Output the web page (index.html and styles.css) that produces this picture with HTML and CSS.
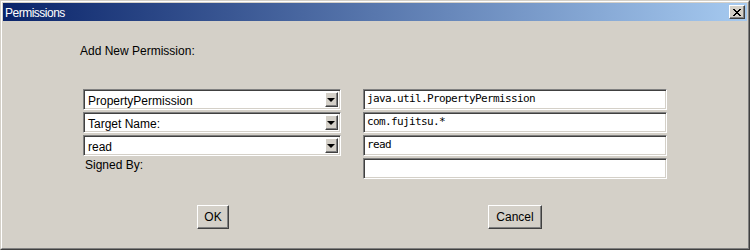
FILE: index.html
```html
<!DOCTYPE html>
<html>
<head>
<meta charset="utf-8">
<link rel="stylesheet" href="styles.css">
</head>
<body>
<div class="window">
  <div class="frame">
    <div class="titlebar">
      <span class="title">Permissions</span>
      <span class="close"><svg width="8" height="7" viewBox="0 0 8 7" shape-rendering="crispEdges"><path d="M0 0h2v1h-2zM6 0h2v1h-2zM1 1h2v1h-2zM5 1h2v1h-2zM2 2h4v1h-4zM3 3h2v1h-2zM2 4h4v1h-4zM1 5h2v1h-2zM5 5h2v1h-2zM0 6h2v1h-2zM6 6h2v1h-2z" fill="#000"/></svg></span>
    </div>
    <div class="content">
      <div class="heading">Add New Permission:</div>
      <div class="form">
        <div class="combo"><span class="combo-text">PropertyPermission</span><span class="arrow"><i></i></span></div>
        <div class="field">java.util.PropertyPermission</div>
        <div class="combo"><span class="combo-text">Target Name:</span><span class="arrow"><i></i></span></div>
        <div class="field">com.fujitsu.*</div>
        <div class="combo"><span class="combo-text">read</span><span class="arrow"><i></i></span></div>
        <div class="field">read</div>
        <div class="label">Signed By:</div>
        <div class="field"></div>
      </div>
      <div class="buttons">
        <button class="btn btn-ok">OK</button>
        <button class="btn btn-cancel">Cancel</button>
      </div>
    </div>
  </div>
</div>
</body>
</html>
```
FILE: styles.css
```css
* { box-sizing: border-box; }
html, body { margin: 0; padding: 0; background: #d4d0c8; }
body { font-family: "Liberation Sans", Arial, sans-serif; font-size: 12px; color: #000; }

.window {
  width: 750px;
  height: 250px;
  border: 1px solid;
  border-color: #d4d0c8 #404040 #404040 #d4d0c8;
  background: #d4d0c8;
}
.frame {
  height: 100%;
  border: 1px solid;
  border-color: #fff #808080 #808080 #fff;
  padding: 1px;
}
.titlebar {
  height: 18px;
  background: linear-gradient(to right, #0a246a, #a6caf0);
  display: flex;
  align-items: center;
  justify-content: space-between;
  padding: 0 2px 0 2px;
}
.title {
  color: #fff;
  font-size: 12px;
  letter-spacing: -0.5px;
  line-height: 14px;
  padding-top: 1px;
}
.close {
  width: 16px;
  height: 14px;
  background: #d4d0c8;
  border: 1px solid;
  border-color: #fff #404040 #404040 #fff;
  box-shadow: inset -1px -1px #808080;
  display: flex;
  align-items: center;
  justify-content: center;
  padding-right: 1px;
}
.close svg { display: block; }

.content {
  padding: 23px 0 0 77px;
}
.heading {
  line-height: 14px;
  height: 14px;
}
.form {
  margin: 31px 0 0 3px;
  display: grid;
  grid-template-columns: 258px 304px;
  grid-auto-rows: 21px;
  column-gap: 22px;
  row-gap: 2px;
}
.combo, .field {
  background: #fff;
  border: 1px solid;
  border-color: #808080 #fff #fff #808080;
  box-shadow: inset 1px 1px #404040, inset -1px -1px #d4d0c8;
}
.combo {
  display: flex;
  align-items: stretch;
  padding: 2px;
}
.combo-text {
  flex: 1;
  line-height: 17px;
  padding: 1px 0 0 2px;
  white-space: nowrap;
}
.arrow {
  width: 13px;
  background: #d4d0c8;
  border: 1px solid;
  border-color: #fff #404040 #404040 #fff;
  box-shadow: inset -1px -1px #808080;
  display: flex;
  align-items: center;
  justify-content: center;
}
.arrow i {
  width: 0;
  height: 0;
  border-left: 4px solid transparent;
  border-right: 4px solid transparent;
  border-top: 4px solid #000;
  margin-left: -1px;
}
.field {
  font-family: "DejaVu Sans Mono", "Liberation Mono", monospace;
  font-size: 11px;
  letter-spacing: -0.62px;
  line-height: 13px;
  padding: 2px 0 0 3px;
  white-space: nowrap;
}
.label {
  line-height: 14px;
  padding-left: 2px;
}

.buttons {
  display: flex;
  margin: 26px 0 0 117px;
}
.btn {
  font-family: "Liberation Sans", Arial, sans-serif;
  font-size: 12px;
  height: 24px;
  background: #d4d0c8;
  color: #000;
  border: 1px solid;
  border-color: #fff #404040 #404040 #fff;
  box-shadow: inset -1px -1px #808080;
  padding: 0;
  margin: 0;
  line-height: 20px;
}
.btn-ok { width: 32px; }
.btn-cancel { width: 54px; margin-left: 259px; }
```
